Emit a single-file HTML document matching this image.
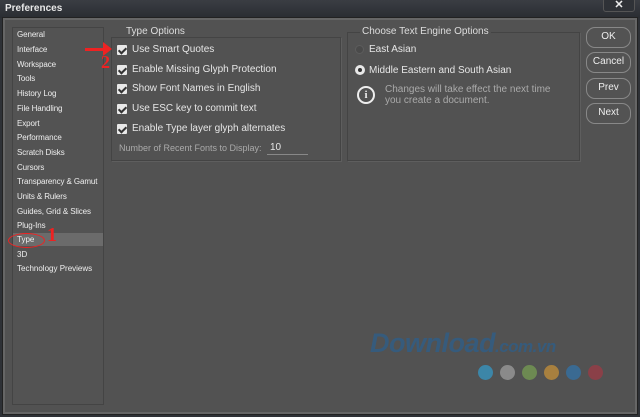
<!DOCTYPE html>
<html><head><style>
*{margin:0;padding:0;box-sizing:border-box}
body{width:640px;height:417px;background:#2e3136;position:relative;overflow:hidden;font-family:"Liberation Sans",sans-serif;color:#ddd}
.title{position:absolute;left:0;top:0;width:640px;height:18px;background:linear-gradient(#3a3d43,#2a2d32)}
.title span{position:absolute;left:5px;top:3px;font-size:10px;color:#e8e8e8;font-weight:bold}
.close{position:absolute;left:603px;top:-2px;width:32px;height:14px;border:1px solid #555;border-radius:3px;background:#2f3237;color:#eee;font-size:11px;text-align:center;line-height:12px;font-weight:bold}
.win{position:absolute;left:3px;top:18px;width:634px;height:396px;background:#525252;border:2px solid #666;box-shadow:0 0 0 1px #222}
.side{position:absolute;left:12px;top:27px;width:92px;height:378px;border:1px solid #444;background:#535353}
.side div{position:absolute;left:4px;font-size:8px;color:#eee;letter-spacing:-0.1px}
.hl{position:absolute;left:13px;top:233px;width:90px;height:13px;background:#6b6b6b}
.box{position:absolute;border:1px solid #444;box-shadow:1px 1px 0 #5e5e5e}
.lg{position:absolute;font-size:10px;color:#ddd;background:#525252;padding:0 2px}
.cb{position:absolute;left:117px;width:10px;height:10px;background:#e8e8e8;border-radius:1px}
.cb:after{content:"";position:absolute;left:3px;top:1px;width:3px;height:6px;border:solid #333;border-width:0 2px 2px 0;transform:rotate(45deg)}
.t{position:absolute;font-size:10px;color:#e6e6e6}
.s{position:absolute;font-size:8px;color:#eee}
.btn{position:absolute;left:586px;width:45px;height:21px;border:1.5px solid #888;border-radius:9px;font-size:10px;color:#eee;text-align:center;line-height:18px;background:#535353}
.dot{position:absolute;top:365px;width:15px;height:15px;border-radius:50%}
</style></head><body>
<div class="title"><span>Preferences</span></div>
<div class="close">✕</div>
<div class="win"></div>
<div class="side">
<div style="top:2px">General</div><div style="top:17px">Interface</div><div style="top:32px">Workspace</div><div style="top:46px">Tools</div><div style="top:61px">History Log</div><div style="top:76px">File Handling</div><div style="top:91px">Export</div><div style="top:105px">Performance</div><div style="top:120px">Scratch Disks</div><div style="top:135px">Cursors</div><div style="top:149px">Transparency &amp; Gamut</div><div style="top:164px">Units &amp; Rulers</div><div style="top:179px">Guides, Grid &amp; Slices</div><div style="top:193px">Plug-Ins</div>
</div>
<div class="hl"></div>
<div class="s" style="left:17px;top:235px">Type</div>
<div style="position:absolute;left:8px;top:233px;width:37px;height:15px;border:1px solid #e22;border-radius:50%"></div>
<div style="position:absolute;left:47px;top:224px;font-size:20px;font-weight:bold;color:#e22;font-family:'Liberation Serif',serif">1</div>
<div class="s" style="left:17px;top:250px">3D</div>
<div class="s" style="left:17px;top:264px">Technology Previews</div>

<div class="box" style="left:111px;top:37px;width:230px;height:124px"></div>
<div class="lg" style="left:124px;top:26px">Type Options</div>
<div class="cb" style="top:45px"></div><div class="t" style="left:132px;top:44px">Use Smart Quotes</div>
<div class="cb" style="top:65px"></div><div class="t" style="left:132px;top:64px">Enable Missing Glyph Protection</div>
<div class="cb" style="top:84px"></div><div class="t" style="left:132px;top:83px">Show Font Names in English</div>
<div class="cb" style="top:104px"></div><div class="t" style="left:132px;top:103px">Use ESC key to commit text</div>
<div class="cb" style="top:124px"></div><div class="t" style="left:132px;top:123px">Enable Type layer glyph alternates</div>
<div class="t" style="left:119px;top:143px;color:#aaa;font-size:9px">Number of Recent Fonts to Display:</div>
<div class="t" style="left:270px;top:142px">10</div>
<div style="position:absolute;left:267px;top:154px;width:41px;height:1px;background:#888"></div>
<div style="position:absolute;left:85px;top:48px;width:20px;height:3px;background:#e22"></div>
<div style="position:absolute;left:103px;top:42px;width:0;height:0;border-left:9px solid #e22;border-top:7px solid transparent;border-bottom:7px solid transparent"></div>
<div style="position:absolute;left:101px;top:52px;font-size:18px;font-weight:bold;color:#e22;font-family:'Liberation Serif',serif">2</div>

<div class="box" style="left:347px;top:32px;width:233px;height:129px"></div>
<div class="lg" style="left:360px;top:26px">Choose Text Engine Options</div>
<div style="position:absolute;left:355px;top:45px;width:9px;height:9px;border-radius:50%;background:#4a4a4a;border:1px solid #5d5d5d"></div>
<div class="t" style="left:369px;top:44px">East Asian</div>
<div style="position:absolute;left:355px;top:65px;width:10px;height:10px;border-radius:50%;background:#e8e8e8"><div style="position:absolute;left:3px;top:3px;width:4px;height:4px;border-radius:50%;background:#333"></div></div>
<div class="t" style="left:369px;top:65px">Middle Eastern and South Asian</div>
<div style="position:absolute;left:357px;top:86px;width:18px;height:18px;border:2px solid #eee;border-radius:50%;color:#eee;font-size:11px;font-weight:bold;text-align:center;line-height:14px;font-family:'Liberation Serif',serif">i</div>
<div class="t" style="left:385px;top:84px;color:#aaa;line-height:11px">Changes will take effect the next time<br>you create a document.</div>

<div class="btn" style="top:27px">OK</div>
<div class="btn" style="top:52px">Cancel</div>
<div class="btn" style="top:78px">Prev</div>
<div class="btn" style="top:103px">Next</div>

<div style="position:absolute;left:370px;top:328px;font-size:27px;font-weight:bold;font-style:italic;color:#2d5f8a;opacity:.75;letter-spacing:-0.5px">Download<span style="font-size:17px">.com.vn</span></div>
<div class="dot" style="left:478px;background:#3c86a8"></div>
<div class="dot" style="left:500px;background:#8a8a8a"></div>
<div class="dot" style="left:522px;background:#6d8a52"></div>
<div class="dot" style="left:544px;background:#a8803f"></div>
<div class="dot" style="left:566px;background:#3a6a92"></div>
<div class="dot" style="left:588px;background:#8a4048"></div>
</body></html>
